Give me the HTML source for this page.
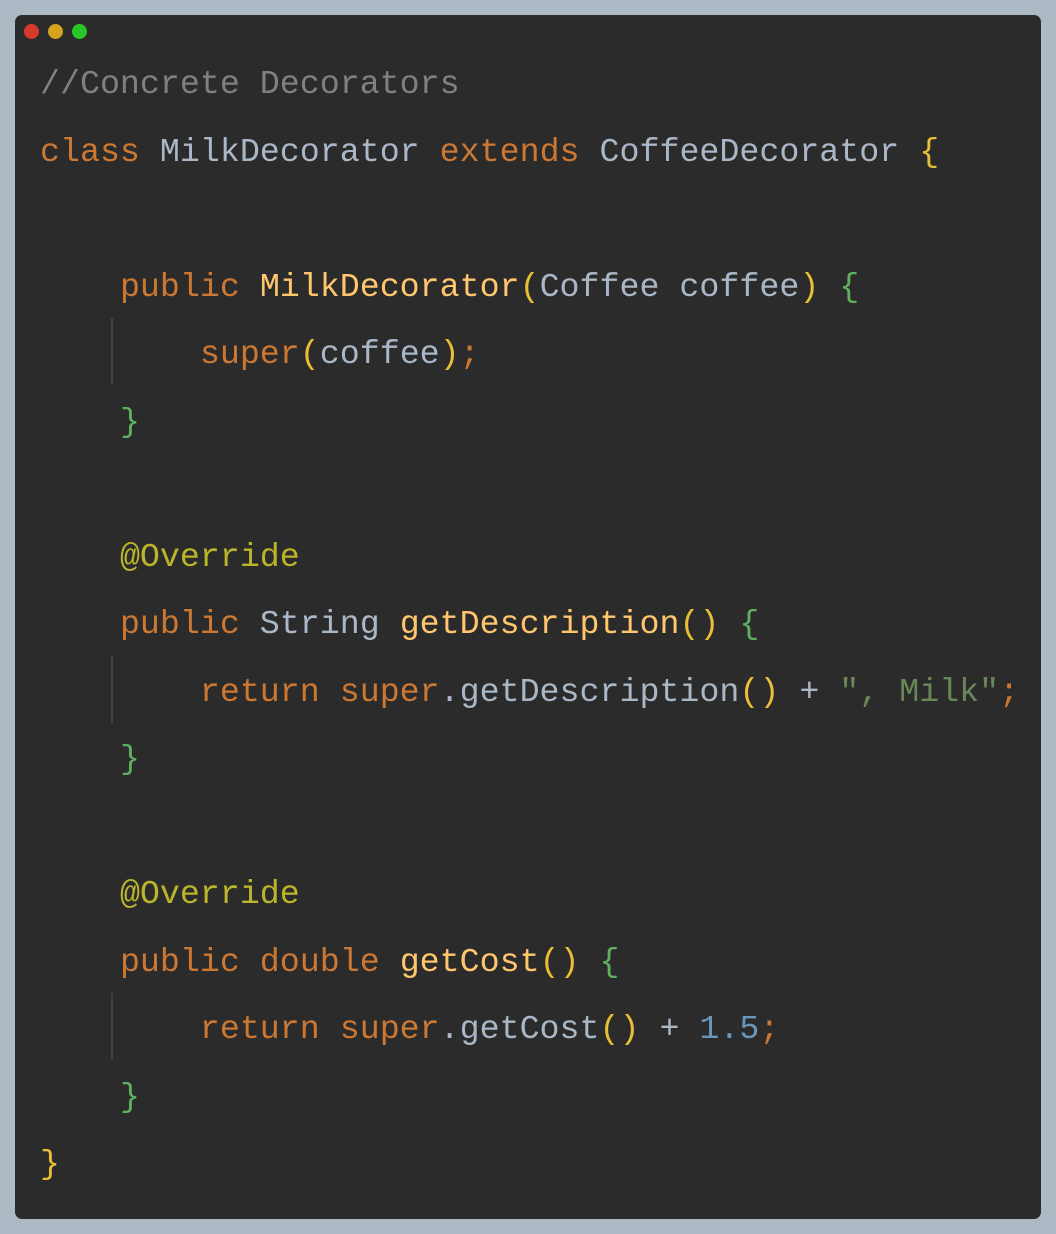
<!DOCTYPE html>
<html><head><meta charset="utf-8"><style>
html,body{margin:0;padding:0;}
body{width:1056px;height:1234px;background:#adb9c5;position:relative;overflow:hidden;}
.win{position:absolute;left:15px;top:15px;width:1026px;height:1204px;background:#2b2b2b;border-radius:7px;}
.dot{position:absolute;top:24px;width:15px;height:15px;border-radius:50%;}
pre{position:absolute;left:40px;top:51px;margin:0;font-family:"Liberation Mono",monospace;font-size:33.3px;line-height:67.5px;color:#a9b7c6;white-space:pre;}
.k{color:#cc7832}.c{color:#808080}.m{color:#ffc66d}.y{color:#e8bf36}.g{color:#5fb05f}.a{color:#bbb529}.s{color:#6a8759}.n{color:#6897bb}
.guide{position:absolute;left:111px;width:2px;background:#344a34;height:67px;}
</style></head><body>
<div class="win"></div>
<div class="dot" style="left:24px;background:#d63a2a"></div>
<div class="dot" style="left:48px;background:#d6a21f"></div>
<div class="dot" style="left:72px;background:#28c727"></div>
<div class="guide" style="top:318px"></div>
<div class="guide" style="top:656px"></div>
<div class="guide" style="top:993px"></div>
<pre><span class="c">//Concrete Decorators</span>
<span class="k">class</span> MilkDecorator <span class="k">extends</span> CoffeeDecorator <span class="y">{</span>

    <span class="k">public</span> <span class="m">MilkDecorator</span><span class="y">(</span>Coffee coffee<span class="y">)</span> <span class="g">{</span>
        <span class="k">super</span><span class="y">(</span>coffee<span class="y">)</span><span class="k">;</span>
    <span class="g">}</span>

    <span class="a">@Override</span>
    <span class="k">public</span> String <span class="m">getDescription</span><span class="y">()</span> <span class="g">{</span>
        <span class="k">return super</span>.getDescription<span class="y">()</span> + <span class="s">", Milk"</span><span class="k">;</span>
    <span class="g">}</span>

    <span class="a">@Override</span>
    <span class="k">public double</span> <span class="m">getCost</span><span class="y">()</span> <span class="g">{</span>
        <span class="k">return super</span>.getCost<span class="y">()</span> + <span class="n">1.5</span><span class="k">;</span>
    <span class="g">}</span>
<span class="y">}</span></pre>
</body></html>
